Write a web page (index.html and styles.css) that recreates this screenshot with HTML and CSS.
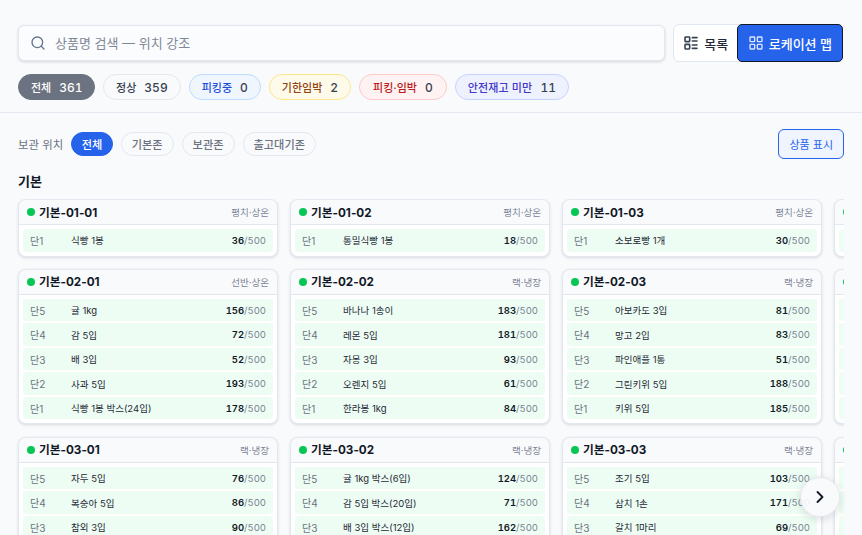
FILE: index.html
```html
<!DOCTYPE html>
<html lang="ko">

<head>
    <meta charset="UTF-8">
    <meta name="viewport" content="width=device-width, initial-scale=1.0">
    <title>로케이션 맵</title>
    <link rel="stylesheet" href="styles.css">
</head>

<body>
    <!-- search + view toggle -->
    <header class="topbar">
        <div class="top-row">
            <label class="search">
                <svg class="search-icon" viewBox="0 0 24 24" fill="none" stroke="currentColor" stroke-width="2" stroke-linecap="round" stroke-linejoin="round"><circle cx="11" cy="11" r="8"/><path d="m21 21-4.3-4.3"/></svg>
                <input type="text" placeholder="상품명 검색 — 위치 강조">
            </label>
            <div class="view-toggle">
                <button class="view-btn">
                    <svg viewBox="0 0 24 24" fill="none" stroke="currentColor" stroke-width="2.4" stroke-linecap="round" stroke-linejoin="round"><rect x="3" y="3" width="7" height="7" rx="1"/><rect x="3" y="14" width="7" height="7" rx="1"/><path d="M14 4h7M14 9h7M14 15h7M14 20h7"/></svg>
                    목록
                </button>
                <button class="view-btn active">
                    <svg viewBox="0 0 24 24" fill="none" stroke="currentColor" stroke-width="2" stroke-linecap="round" stroke-linejoin="round"><rect x="3" y="3" width="7" height="7" rx="1"/><rect x="14" y="3" width="7" height="7" rx="1"/><rect x="3" y="14" width="7" height="7" rx="1"/><rect x="14" y="14" width="7" height="7" rx="1"/></svg>
                    로케이션 맵
                </button>
            </div>
        </div>
        <div class="chips">
            <span class="chip chip-all">전체 <b>361</b></span>
            <span class="chip">정상 <b>359</b></span>
            <span class="chip chip-picking">피킹중 <b>0</b></span>
            <span class="chip chip-expiry">기한임박 <b>2</b></span>
            <span class="chip chip-danger">피킹·임박 <b>0</b></span>
            <span class="chip chip-safety">안전재고 미만 <b>11</b></span>
        </div>
    </header>

    <main>
        <!-- zone filter -->
        <div class="filter-row">
            <div class="zones">
                <span class="zones-label">보관 위치</span>
                <button class="zone active">전체</button>
                <button class="zone">기본존</button>
                <button class="zone">보관존</button>
                <button class="zone">출고대기존</button>
            </div>
            <button class="show-btn">상품 표시</button>
        </div>

        <h2 class="zone-title">기본</h2>

        <div class="map-wrap">
            <div class="map-grid">
                <!-- row 01 -->
                <section class="card">
                    <div class="card-head"><span class="dot"></span><strong>기본-01-01</strong><em>평치·상온</em></div>
                    <div class="card-body">
                        <div class="slot"><span class="lv">단1</span><span class="name">식빵 1봉</span><span class="qty"><b>36</b>/500</span></div>
                    </div>
                </section>
                <section class="card">
                    <div class="card-head"><span class="dot"></span><strong>기본-01-02</strong><em>평치·상온</em></div>
                    <div class="card-body">
                        <div class="slot"><span class="lv">단1</span><span class="name">통밀식빵 1봉</span><span class="qty"><b>18</b>/500</span></div>
                    </div>
                </section>
                <section class="card">
                    <div class="card-head"><span class="dot"></span><strong>기본-01-03</strong><em>평치·상온</em></div>
                    <div class="card-body">
                        <div class="slot"><span class="lv">단1</span><span class="name">소보로빵 1개</span><span class="qty"><b>30</b>/500</span></div>
                    </div>
                </section>
                <section class="card">
                    <div class="card-head"><span class="dot"></span></div>
                    <div class="card-body">
                        <div class="slot"></div>
                    </div>
                </section>

                <!-- row 02 -->
                <section class="card">
                    <div class="card-head"><span class="dot"></span><strong>기본-02-01</strong><em>선반·상온</em></div>
                    <div class="card-body">
                        <div class="slot"><span class="lv">단5</span><span class="name">귤 1kg</span><span class="qty"><b>156</b>/500</span></div>
                        <div class="slot"><span class="lv">단4</span><span class="name">감 5입</span><span class="qty"><b>72</b>/500</span></div>
                        <div class="slot"><span class="lv">단3</span><span class="name">배 3입</span><span class="qty"><b>52</b>/500</span></div>
                        <div class="slot"><span class="lv">단2</span><span class="name">사과 5입</span><span class="qty"><b>193</b>/500</span></div>
                        <div class="slot"><span class="lv">단1</span><span class="name">식빵 1봉 박스(24입)</span><span class="qty"><b>178</b>/500</span></div>
                    </div>
                </section>
                <section class="card">
                    <div class="card-head"><span class="dot"></span><strong>기본-02-02</strong><em>랙·냉장</em></div>
                    <div class="card-body">
                        <div class="slot"><span class="lv">단5</span><span class="name">바나나 1송이</span><span class="qty"><b>183</b>/500</span></div>
                        <div class="slot"><span class="lv">단4</span><span class="name">레몬 5입</span><span class="qty"><b>181</b>/500</span></div>
                        <div class="slot"><span class="lv">단3</span><span class="name">자몽 3입</span><span class="qty"><b>93</b>/500</span></div>
                        <div class="slot"><span class="lv">단2</span><span class="name">오렌지 5입</span><span class="qty"><b>61</b>/500</span></div>
                        <div class="slot"><span class="lv">단1</span><span class="name">한라봉 1kg</span><span class="qty"><b>84</b>/500</span></div>
                    </div>
                </section>
                <section class="card">
                    <div class="card-head"><span class="dot"></span><strong>기본-02-03</strong><em>랙·냉장</em></div>
                    <div class="card-body">
                        <div class="slot"><span class="lv">단5</span><span class="name">아보카도 3입</span><span class="qty"><b>81</b>/500</span></div>
                        <div class="slot"><span class="lv">단4</span><span class="name">망고 2입</span><span class="qty"><b>83</b>/500</span></div>
                        <div class="slot"><span class="lv">단3</span><span class="name">파인애플 1통</span><span class="qty"><b>51</b>/500</span></div>
                        <div class="slot"><span class="lv">단2</span><span class="name">그린키위 5입</span><span class="qty"><b>188</b>/500</span></div>
                        <div class="slot"><span class="lv">단1</span><span class="name">키위 5입</span><span class="qty"><b>185</b>/500</span></div>
                    </div>
                </section>
                <section class="card">
                    <div class="card-head"><span class="dot"></span></div>
                    <div class="card-body">
                        <div class="slot"></div>
                        <div class="slot"></div>
                        <div class="slot"></div>
                        <div class="slot"></div>
                        <div class="slot"></div>
                    </div>
                </section>

                <!-- row 03 -->
                <section class="card">
                    <div class="card-head"><span class="dot"></span><strong>기본-03-01</strong><em>랙·냉장</em></div>
                    <div class="card-body">
                        <div class="slot"><span class="lv">단5</span><span class="name">자두 5입</span><span class="qty"><b>76</b>/500</span></div>
                        <div class="slot"><span class="lv">단4</span><span class="name">복숭아 5입</span><span class="qty"><b>86</b>/500</span></div>
                        <div class="slot"><span class="lv">단3</span><span class="name">참외 3입</span><span class="qty"><b>90</b>/500</span></div>
                    </div>
                </section>
                <section class="card">
                    <div class="card-head"><span class="dot"></span><strong>기본-03-02</strong><em>랙·냉장</em></div>
                    <div class="card-body">
                        <div class="slot"><span class="lv">단5</span><span class="name">귤 1kg 박스(6입)</span><span class="qty"><b>124</b>/500</span></div>
                        <div class="slot"><span class="lv">단4</span><span class="name">감 5입 박스(20입)</span><span class="qty"><b>71</b>/500</span></div>
                        <div class="slot"><span class="lv">단3</span><span class="name">배 3입 박스(12입)</span><span class="qty"><b>162</b>/500</span></div>
                    </div>
                </section>
                <section class="card">
                    <div class="card-head"><span class="dot"></span><strong>기본-03-03</strong><em>랙·냉장</em></div>
                    <div class="card-body">
                        <div class="slot"><span class="lv">단5</span><span class="name">조기 5입</span><span class="qty"><b>103</b>/500</span></div>
                        <div class="slot"><span class="lv">단4</span><span class="name">삼치 1손</span><span class="qty"><b>171</b>/500</span></div>
                        <div class="slot"><span class="lv">단3</span><span class="name">갈치 1마리</span><span class="qty"><b>69</b>/500</span></div>
                    </div>
                </section>
                <section class="card">
                    <div class="card-head"><span class="dot"></span></div>
                    <div class="card-body">
                        <div class="slot"></div>
                        <div class="slot"></div>
                        <div class="slot"></div>
                    </div>
                </section>
            </div>

            <button class="next-btn" aria-label="다음">
                <svg viewBox="0 0 24 24" fill="none" stroke="currentColor" stroke-width="2.2" stroke-linecap="round" stroke-linejoin="round"><path d="m9 18 6-6-6-6"/></svg>
            </button>
        </div>
    </main>
</body>

</html>
```

FILE: styles.css
```css
* {
    box-sizing: border-box;
}

html,
body {
    height: 535px;
    overflow: hidden;
}

body {
    margin: 0;
    background-color: #f9fafc;
    color: #111827;
    font-family: "Inter", "Noto Sans CJK KR", sans-serif;
}

button {
    font-family: inherit;
    cursor: pointer;
}

/* top area */
.topbar {
    padding: 24px 18px 12px;
    border-bottom: 1px solid #e2e8f0;
}

.top-row {
    display: flex;
    align-items: center;
    gap: 8px;
    padding-right: 1px;
}

.search {
    flex: 1;
    height: 36px;
    display: flex;
    align-items: center;
    gap: 9px;
    padding: 0 11px;
    background-color: #fbfcfe;
    border: 1px solid #e2e8f0;
    border-radius: 6px;
    box-shadow: 0 1px 3px rgba(15, 23, 42, 0.16);
}

.search-icon {
    width: 16px;
    height: 16px;
    color: #64748b;
}

.search input {
    flex: 1;
    border: none;
    outline: none;
    padding: 0;
    background: none;
    font-family: inherit;
    font-size: 13px;
}

.search input::placeholder {
    color: #808896;
    opacity: 1;
}

.view-toggle {
    display: flex;
    height: 38px;
    background-color: #fff;
    border: 1px solid #e2e8f0;
    border-radius: 6px;
}

.view-btn {
    display: flex;
    align-items: center;
    gap: 5px;
    padding: 0 9px;
    border: none;
    border-radius: 5px;
    background: none;
    color: #1f2937;
    font-size: 13px;
    font-weight: 500;
}

.view-btn svg {
    width: 16px;
    height: 16px;
    color: #374151;
}

.view-btn.active {
    margin: -1px -1px -1px 0;
    padding: 0 10px 0 9.5px;
    background-color: #2563eb;
    border: 1px solid #111827;
    color: #fff;
}

.view-btn.active svg {
    color: #dbe6ff;
}

.chips {
    display: flex;
    gap: 8px;
    margin-top: 12px;
}

.chip {
    display: flex;
    align-items: center;
    gap: 8px;
    height: 26px;
    padding: 0 12px;
    border: 1px solid #e5e7eb;
    border-radius: 13px;
    color: #374151;
    font-size: 11px;
    font-weight: 500;
    white-space: nowrap;
}

.chip b {
    font-size: 12px;
    font-weight: 500;
    font-variant-numeric: tabular-nums;
    color: #374151;
}

.chip-all {
    padding-right: 11.5px;
    background-color: #6b7280;
    border-color: #6b7280;
    color: #fff;
}

.chip-all b {
    color: #fff;
}

.chip-picking {
    background-color: #eff6ff;
    border-color: #bfdbfe;
    color: #1d4ed8;
}

.chip-expiry {
    background-color: #fffbeb;
    border-color: #fde68a;
    color: #92400e;
}

.chip-danger {
    padding: 0 13px;
    background-color: #fef2f2;
    border-color: #fecaca;
    color: #b91c1c;
}

.chip-safety {
    letter-spacing: 0.15px;
    background-color: #eef2ff;
    border-color: #c7d2fe;
    color: #4338ca;
}

/* zone filter */
main {
    padding: 16px 18px 0;
}

.filter-row {
    display: flex;
    align-items: center;
    justify-content: space-between;
}

.zones {
    display: flex;
    align-items: center;
    gap: 8px;
}

.zones-label {
    color: #6b7280;
    font-size: 11.4px;
}

.zone {
    height: 24px;
    padding: 0 10px;
    background: none;
    border: 1px solid #e2e8f0;
    border-radius: 12px;
    color: #6b7280;
    font-size: 11.2px;
    font-weight: 500;
}

.zone.active {
    padding: 0 9.5px;
    background-color: #2563eb;
    border-color: #2563eb;
    color: #fff;
}

.show-btn {
    height: 30px;
    padding: 0 10px;
    background-color: #eff4ff;
    border: 1px solid #2563eb;
    border-radius: 6px;
    color: #2563eb;
    font-size: 11px;
    font-weight: 400;
}

.zone-title {
    margin: 13px 0 9px;
    font-size: 13px;
    line-height: 18px;
    font-weight: 600;
}

/* location cards */
.map-wrap {
    position: relative;
}

.map-grid {
    display: grid;
    grid-template-columns: repeat(4, 260px);
    gap: 12.4px 12px;
    align-items: start;
    overflow: hidden;
    margin: 0 0 0 -4px;
    padding: 0 0 4px 4px;
}

.card {
    background-color: #fff;
    border: 1px solid #e2e8f0;
    border-radius: 8px;
    box-shadow: 0 1px 3px rgba(15, 23, 42, 0.14);
}

.card-head {
    display: flex;
    align-items: center;
    height: 25px;
    padding: 0 8px;
    background-color: #f9fafc;
    border-bottom: 1px solid #e2e8f0;
    border-radius: 8px 8px 0 0;
}

.dot {
    width: 8px;
    height: 8px;
    margin-right: 4px;
    border-radius: 50%;
    background-color: #06c755;
}

.card-head strong {
    flex: 1;
    margin-bottom: 2px;
    font-size: 11.7px;
    font-weight: 700;
}

.card-head em {
    color: #7b8494;
    font-size: 9.5px;
    font-style: normal;
}

.card-body {
    display: flex;
    flex-direction: column;
    gap: 2px;
    padding: 4px;
}

.slot {
    display: flex;
    align-items: center;
    height: 22.5px;
    padding: 0 7px;
    background-color: #edfdf3;
    border-radius: 4px;
}

.lv {
    width: 41px;
    color: #6b7280;
    font-size: 10px;
}

.name {
    flex: 1;
    color: #1f2937;
    font-size: 9.5px;
}

.qty {
    color: #7b8494;
    font-size: 9.5px;
    font-variant-numeric: tabular-nums;
}

.qty b {
    color: #111827;
    font-weight: 600;
}

.next-btn {
    position: absolute;
    right: 4.5px;
    top: 278px;
    width: 40px;
    height: 40px;
    display: flex;
    align-items: center;
    justify-content: center;
    padding: 0;
    background-color: rgba(249, 250, 252, 0.93);
    border: 1px solid #e5e7eb;
    border-radius: 50%;
    box-shadow: 0 2px 8px rgba(15, 23, 42, 0.14);
    color: #111827;
}

.next-btn svg {
    width: 20px;
    height: 20px;
}
```
